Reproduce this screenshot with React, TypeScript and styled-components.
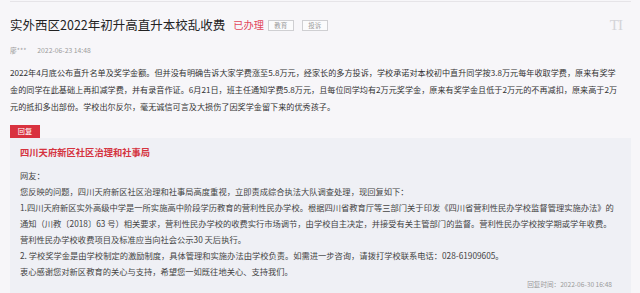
import React from "react";
import styled, { createGlobalStyle } from "styled-components";

const Global = createGlobalStyle`
  html, body { margin: 0; padding: 0; background: #f7f6f9; }
  body { font-family: "Noto Sans CJK SC", "Noto Sans", sans-serif; overflow: hidden; }
`;

const Page = styled.div`
  width: 621px;
  height: 293px;
  margin-left: 10px;
  padding-top: 1px;
  box-sizing: border-box;
  display: flex;
  flex-direction: column;
  overflow: hidden;
`;

const Divider = styled.div`
  height: 1px;
  flex: none;
  background: #e6e4e8;
`;

const TitleRow = styled.div`
  display: flex;
  align-items: center;
  flex: none;
  height: 16px;
  margin-top: 15px;
`;

const Title = styled.h1`
  margin: 0;
  font-size: 12.5px;
  font-weight: 400;
  line-height: 16px;
  color: #222;
  white-space: nowrap;
`;

const Status = styled.span`
  margin-left: 8px;
  font-size: 10.2px;
  line-height: 16px;
  color: #e2455a;
  white-space: nowrap;
`;

const Tag = styled.span<{ $gap: number }>`
  margin-left: ${(p) => p.$gap}px;
  width: 26px;
  height: 11px;
  box-sizing: border-box;
  border: 1px solid #cfcfd2;
  background: #fbfbfc;
  display: flex;
  align-items: center;
  justify-content: center;
  font-size: 6.5px;
  color: #9a9a9a;
`;

const FontIcon = styled.span`
  margin-left: auto;
  margin-right: 9px;
  font-family: "Liberation Serif", "DejaVu Serif", serif;
  font-size: 15px;
  line-height: 16px;
  color: #d4d4d8;
  letter-spacing: -1px;
`;

const Meta = styled.div`
  display: flex;
  align-items: center;
  flex: none;
  gap: 11px;
  height: 12px;
  margin-top: 11px;
  font-size: 6.8px;
  color: #9c9c9c;
`;

const Body = styled.p`
  margin: 8px 0 0;
  flex: none;
  font-size: 8.15px;
  line-height: 17px;
  color: #333;
  white-space: nowrap;
`;

const ReplyLabel = styled.div`
  margin-top: 10px;
  flex: none;
  width: 30px;
  height: 12.5px;
  background: #d9323f;
  color: #fff;
  font-size: 7.2px;
  line-height: 12.5px;
  text-align: center;
`;

const ReplyBox = styled.div`
  flex: 1;
  min-height: 0;
  background: #eff0f5;
  padding: 7.5px 19px 0 10px;
`;

const ReplyTitle = styled.div`
  font-size: 9.3px;
  font-weight: 700;
  line-height: 14px;
  color: #d5333f;
  white-space: nowrap;
`;

const ReplyText = styled.div`
  margin-top: 7.5px;
  font-size: 8.27px;
  line-height: 16px;
  color: #444;
  white-space: nowrap;
`;

const ReplyTime = styled.div`
  text-align: right;
  font-size: 6.6px;
  line-height: 10px;
  color: #9a9a9a;
`;

const replyLines = [
  "网友：",
  "您反映的问题，四川天府新区社区治理和社事局高度重视，立即责成综合执法大队调查处理，现回复如下：",
  "1.四川天府新区实外高级中学是一所实施高中阶段学历教育的营利性民办学校。根据四川省教育厅等三部门关于印发《四川省营利性民办学校监督管理实施办法》的",
  "通知（川教〔2018〕63 号）相关要求，营利性民办学校的收费实行市场调节，由学校自主决定，并接受有关主管部门的监督。营利性民办学校按学期或学年收费。",
  "营利性民办学校收费项目及标准应当向社会公示30 天后执行。",
  "2. 学校奖学金是由学校制定的激励制度，具体管理和实施办法由学校负责。如需进一步咨询，请拨打学校联系电话：028-61909605。",
  "衷心感谢您对新区教育的关心与支持，希望您一如既往地关心、支持我们。",
];

const bodyLines = [
  "2022年4月底公布直升名单及奖学金额。但并没有明确告诉大家学费涨至5.8万元，经家长的多方投诉，学校承诺对本校初中直升同学按3.8万元每年收取学费，原来有奖学",
  "金的同学在此基础上再扣减学费，并有录音作证。6月21日，班主任通知学费5.8万元，且每位同学均有2万元奖学金，原来有奖学金且低于2万元的不再减扣，原来高于2万",
  "元的抵扣多出部份。学校出尔反尔，毫无诚信可言及大损伤了因奖学金留下来的优秀孩子。",
];

export default function App() {
  return (
    <>
      <Global />
      <Page>
        <Divider />
        <TitleRow>
          <Title>实外西区2022年初升高直升本校乱收费</Title>
          <Status>已办理</Status>
          <Tag $gap={4}>教育</Tag>
          <Tag $gap={8}>投诉</Tag>
          <FontIcon>TI</FontIcon>
        </TitleRow>
        <Meta>
          <span>廖***</span>
          <span>2022-06-23 14:48</span>
        </Meta>
        <Body>
          {bodyLines.map((l, i) => (
            <React.Fragment key={i}>
              {l}
              {i < bodyLines.length - 1 && <br />}
            </React.Fragment>
          ))}
        </Body>
        <ReplyLabel>回复</ReplyLabel>
        <ReplyBox>
          <ReplyTitle>四川天府新区社区治理和社事局</ReplyTitle>
          <ReplyText>
            {replyLines.map((l, i) => (
              <React.Fragment key={i}>
                {l}
                {i < replyLines.length - 1 && <br />}
              </React.Fragment>
            ))}
          </ReplyText>
          <ReplyTime>回复时间：2022-06-30 16:48</ReplyTime>
        </ReplyBox>
      </Page>
    </>
  );
}
